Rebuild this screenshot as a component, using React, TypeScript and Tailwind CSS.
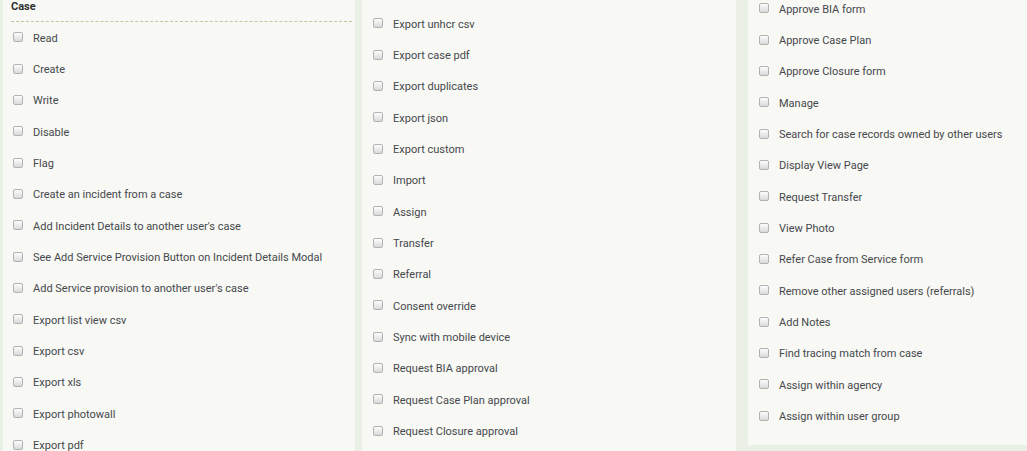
const col1 = [
  'Read',
  'Create',
  'Write',
  'Disable',
  'Flag',
  'Create an incident from a case',
  "Add Incident Details to another user's case",
  'See Add Service Provision Button on Incident Details Modal',
  "Add Service provision to another user's case",
  'Export list view csv',
  'Export csv',
  'Export xls',
  'Export photowall',
  'Export pdf',
];

const col2 = [
  'Export unhcr csv',
  'Export case pdf',
  'Export duplicates',
  'Export json',
  'Export custom',
  'Import',
  'Assign',
  'Transfer',
  'Referral',
  'Consent override',
  'Sync with mobile device',
  'Request BIA approval',
  'Request Case Plan approval',
  'Request Closure approval',
];

const col3 = [
  'Approve BIA form',
  'Approve Case Plan',
  'Approve Closure form',
  'Manage',
  'Search for case records owned by other users',
  'Display View Page',
  'Request Transfer',
  'View Photo',
  'Refer Case from Service form',
  'Remove other assigned users (referrals)',
  'Add Notes',
  'Find tracing match from case',
  'Assign within agency',
  'Assign within user group',
];

function PermRow({ label }: { label: string }) {
  return (
    <label className="flex items-center h-[31.35px] cursor-pointer">
      <span className="w-[10px] h-[10px] shrink-0 rounded-[2px] border border-[#b3b3b3] bg-gradient-to-b from-[#fdfdfd] to-[#dadada] mt-[-3px]" />
      <span className="ml-[10px] text-[11px] leading-[14px] text-[#45484d]">{label}</span>
    </label>
  );
}

export default function App() {
  return (
    <div
      className="flex w-[1027px] h-[451px] overflow-hidden bg-[#ebf0e6] pl-[3px]"
      style={{ fontFamily: 'Roboto, "Liberation Sans", sans-serif' }}
    >
      <div className="w-[352px] shrink-0 bg-[#f8f8f4] pl-[8px] pr-[3px]">
        <div className="h-[22px] border-b border-dashed border-[#b7cc9f] text-[11px] leading-[14px] font-bold text-[#2f2f2f]">
          Case
        </div>
        <div className="pt-[1px] pl-[2px]">
          {col1.map((p) => (
            <PermRow key={p} label={p} />
          ))}
        </div>
      </div>

      <div className="w-[374px] shrink-0 ml-[7px] bg-[#f8f8f4] pl-[11px] pt-[9px]">
        {col2.map((p) => (
          <PermRow key={p} label={p} />
        ))}
      </div>

      <div className="flex-1 ml-[12px] self-start h-[445px] bg-[#f8f8f4] pl-[11px] overflow-hidden">
        <div className="mt-[-6px]">
          {col3.map((p) => (
            <PermRow key={p} label={p} />
          ))}
        </div>
      </div>
    </div>
  );
}
